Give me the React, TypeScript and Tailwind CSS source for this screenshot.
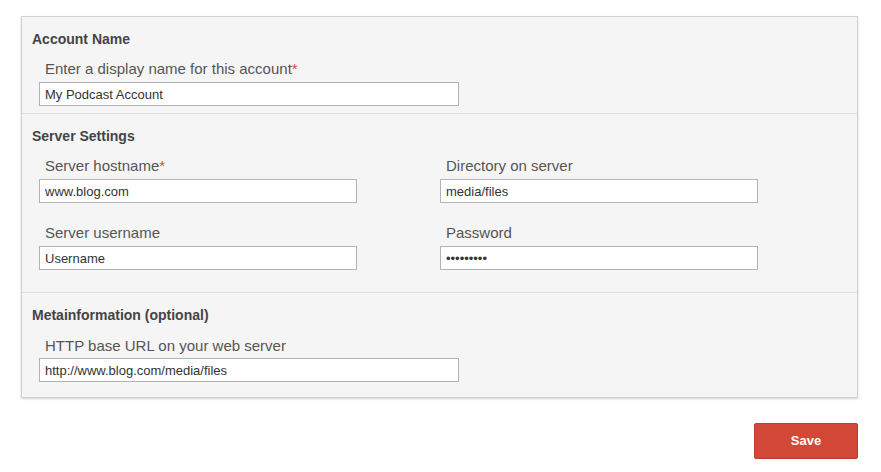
import React from "react";

const font = { fontFamily: '"Liberation Sans", Arial, sans-serif' };

function Field({
  label,
  value,
  required,
  width,
  password,
  tight,
}: {
  label: string;
  value: string;
  required?: boolean;
  width: string;
  password?: boolean;
  tight?: boolean;
}) {
  return (
    <div className="flex flex-col">
      <div className="h-[20px] pl-[6px] text-[15px] leading-[20px] text-[#555]">
        {label}
        {required && <span className="text-[#dd4b39]">*</span>}
      </div>
      <input
        readOnly
        type={password ? "password" : "text"}
        value={value}
        className={`${tight ? "mt-[2px]" : "mt-[3px]"} h-[24px] ${width} border border-[#b3b3b3] bg-white px-[5px] text-[13px] text-[#333] outline-none`}
        style={font}
      />
    </div>
  );
}

function Heading({ children }: { children: React.ReactNode }) {
  return (
    <div className="h-[20px] text-[14px] font-bold leading-[20px] text-[#444]">{children}</div>
  );
}

export default function App() {
  return (
    <div className="min-h-[472px] bg-white pl-[21px] pt-[16px]" style={font}>
      <div className="w-[837px] border border-[#d2d2d2] bg-[#f5f5f5] shadow-[0_1px_2px_rgba(0,0,0,0.18)]">
        <div className="border-b border-[#dedede] pl-[10px] pt-[12px] pb-[7px]">
          <Heading>Account Name</Heading>
          <div className="mt-[10px] pl-[7px]">
            <Field label="Enter a display name for this account" required value="My Podcast Account" width="w-[420px]" />
          </div>
        </div>
        <div className="border-b border-[#dedede] pl-[10px] pt-[12px] pb-[22px]">
          <Heading>Server Settings</Heading>
          <div className="mt-[10px] grid grid-cols-[401px_401px] gap-y-[20px] pl-[7px]">
            <Field label="Server hostname" required value="www.blog.com" width="w-[318px]" />
            <Field label="Directory on server" value="media/files" width="w-[318px]" />
            <Field label="Server username" value="Username" width="w-[318px]" />
            <Field label="Password" value="passwords" password width="w-[318px]" />
          </div>
        </div>
        <div className="pl-[10px] pt-[12px] pb-[15px]">
          <Heading>Metainformation (optional)</Heading>
          <div className="mt-[11px] pl-[7px]">
            <Field label="HTTP base URL on your web server" value="http://www.blog.com/media/files" width="w-[420px]" tight />
          </div>
        </div>
      </div>
      <div className="flex w-[837px] justify-end pt-[25px]">
        <button
          className="h-[36px] w-[104px] rounded-[2px] border border-[#c23a29] bg-[#d14836] text-[13px] font-bold text-white"
          style={font}
        >
          Save
        </button>
      </div>
    </div>
  );
}
